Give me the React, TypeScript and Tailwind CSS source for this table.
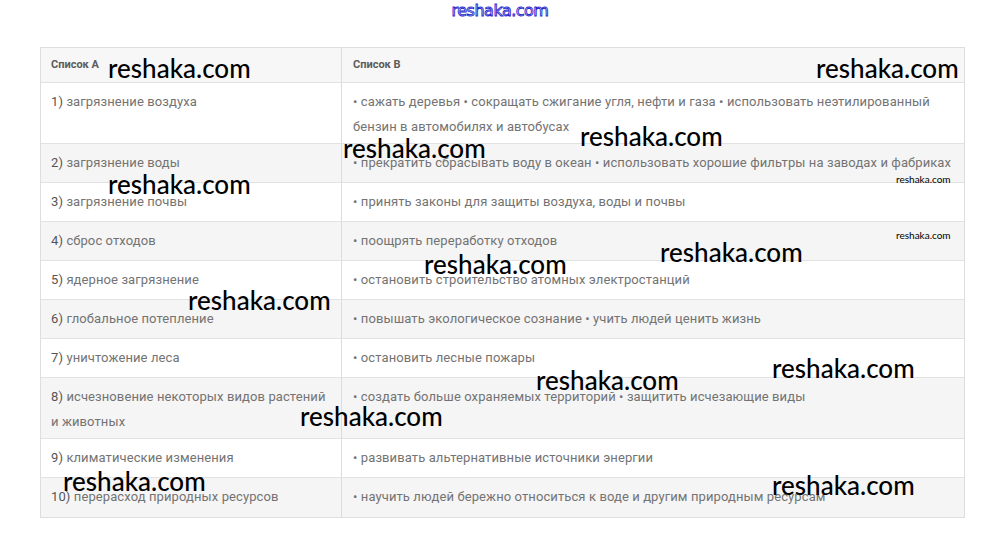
import React from 'react';

const rows: { n: string; a: string; b: string; tall?: boolean }[] = [
  { n: '1)', a: 'загрязнение воздуха', b: '• сажать деревья • сокращать сжигание угля, нефти и газа • использовать неэтилированный бензин в автомобилях и автобусах', tall: true },
  { n: '2)', a: 'загрязнение воды', b: '• прекратить сбрасывать воду в океан • использовать хорошие фильтры на заводах и фабриках' },
  { n: '3)', a: 'загрязнение почвы', b: '• принять законы для защиты воздуха, воды и почвы' },
  { n: '4)', a: 'сброс отходов', b: '• поощрять переработку отходов' },
  { n: '5)', a: 'ядерное загрязнение', b: '• остановить строительство атомных электростанций' },
  { n: '6)', a: 'глобальное потепление', b: '• повышать экологическое сознание • учить людей ценить жизнь' },
  { n: '7)', a: 'уничтожение леса', b: '• остановить лесные пожары' },
  { n: '8)', a: 'исчезновение некоторых видов растений и животных', b: '• создать больше охраняемых территорий • защитить исчезающие виды', tall: true },
  { n: '9)', a: 'климатические изменения', b: '• развивать альтернативные источники энергии' },
  { n: '10)', a: 'перерасход природных ресурсов', b: '• научить людей бережно относиться к воде и другим природным ресурсам' },
];

// watermark positions: left, top
const marks: [number, number][] = [
  [108, 54], [816, 54], [580, 122], [343, 134], [108, 170], [660, 238],
  [424, 250], [188, 286], [536, 366], [772, 354], [300, 402], [63, 467], [772, 471],
];

export default function App() {
  return (
    <div className="relative w-[1000px] h-[543px] bg-white overflow-hidden font-['Roboto',sans-serif]">
      <div className="flex justify-center pt-[1px]">
        <span className="font-['DejaVu_Sans',sans-serif] text-[16px] leading-[20px] tracking-[-0.5px] text-white [-webkit-text-stroke:0.9px_#2626cc]">
          reshaka.com
        </span>
      </div>

      <div className="ml-[40px] mt-[26px] w-[925px] border border-[#dedede]">
        <div className="grid grid-cols-[301px_1fr] bg-[#f7f7f7] border-b border-[#e2e2e2] h-[35px] text-[11px] font-bold text-[#5c5c5c]">
          <div className="border-r border-[#dcdcdc] px-[10px] flex items-center">Список А</div>
          <div className="px-[11px] flex items-center">Список В</div>
        </div>
        {rows.map((r, i) => (
          <div
            key={r.n}
            className={`grid grid-cols-[301px_1fr] border-b border-[#e2e2e2] last:border-b-0 text-[13px] tracking-[0.1px] text-[#737373] leading-[25px] ${r.tall ? 'h-[61px]' : 'h-[39px]'} ${i % 2 === 1 ? 'bg-[#f5f5f5]' : 'bg-white'}`}
          >
            <div className="border-r border-[#dcdcdc] pl-[10px] pr-[6px] pt-[6px]">
              <span className="text-[#555]">{r.n}</span> {r.a}
            </div>
            <div className="pl-[11px] pr-[8px] pt-[6px]">{r.b}</div>
          </div>
        ))}
      </div>

      {marks.map(([x, y], i) => (
        <div
          key={i}
          className="absolute font-['Lato',sans-serif] font-medium text-[26px] leading-[28px] text-black"
          style={{ left: x, top: y }}
        >
          reshaka.com
        </div>
      ))}
      <div className="absolute left-[896px] top-[173px] font-['Lato',sans-serif] text-[10px] leading-[12px] text-black">reshaka.com</div>
      <div className="absolute left-[896px] top-[229px] font-['Lato',sans-serif] text-[10px] leading-[12px] text-black">reshaka.com</div>
    </div>
  );
}
